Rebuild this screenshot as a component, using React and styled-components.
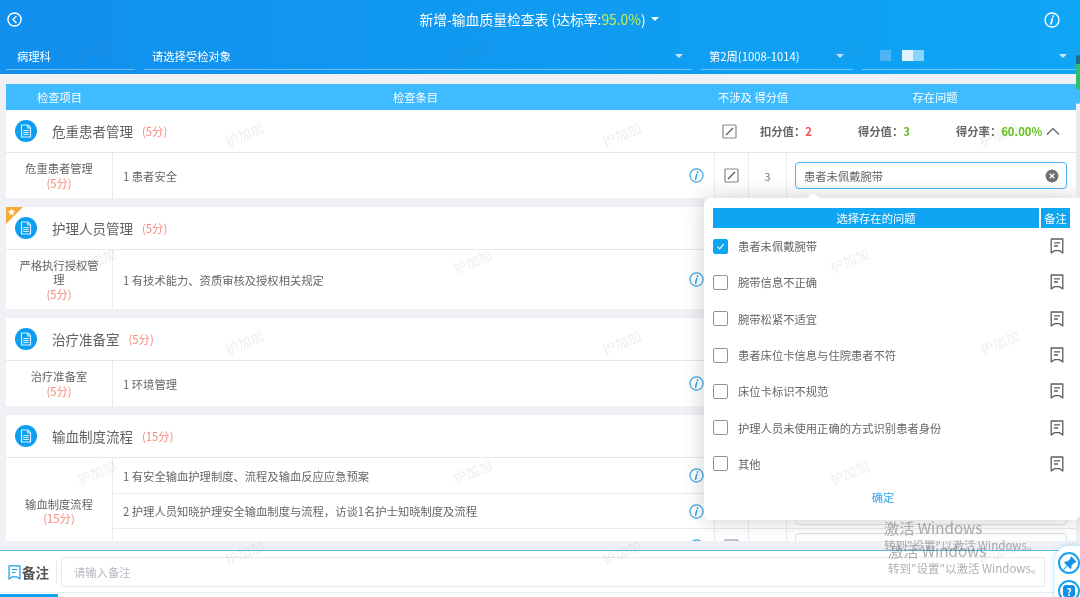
import React from 'react';
import styled, { createGlobalStyle } from 'styled-components';
import { BsPinAngleFill } from 'react-icons/bs';

const GlobalStyle = createGlobalStyle`
  html, body {
    margin: 0;
    padding: 0;
    background: #f0f1f6;
  }
  * {
    box-sizing: border-box;
  }
`;

const Page = styled.div`
  position: relative;
  width: 1080px;
  height: 597px;
  overflow: hidden;
  display: flex;
  flex-direction: column;
  background: #f0f1f6;
  color: #666;
  font-family: "Noto Sans CJK SC", "Noto Sans", sans-serif;
  font-size: 11.3px;
  filter: blur(0.5px);
`;

// Barra superior
const Header = styled.header`
  height: 74px;
  flex: none;
  color: #fff;
  background: linear-gradient(90deg, #118fee, #0ea6f5);
`;

const TitleRow = styled.div`
  height: 39px;
  padding: 0 20px 0 7px;
  display: flex;
  align-items: center;
  justify-content: space-between;
`;

const Title = styled.div`
  display: flex;
  align-items: center;
  gap: 5px;
  font-size: 13.8px;
  margin-left: 12px;
  margin-top: -2px;
`;

const Rate = styled.span`
  color: #c5ee4f;
`;

const Caret = styled.i`
  display: block;
  flex: none;
  width: 0;
  height: 0;
  border-left: 4px solid transparent;
  border-right: 4px solid transparent;
  border-top: 4px solid ${(p) => p.$color || '#fff'};
`;

const FilterRow = styled.div`
  height: 31px;
  padding: 0 4px 0 6px;
  display: flex;
  gap: 9px;
`;

const Filter = styled.div`
  width: ${(p) => p.$width}px;
  flex: ${(p) => (p.$width ? 'none' : 1)};
  padding: 3px 9px 0 ${(p) => p.$left || 11}px;
  display: flex;
  align-items: center;
  justify-content: space-between;
  font-size: 11.3px;
  border-bottom: 1px solid rgba(255, 255, 255, 0.4);
`;

const Masks = styled.div`
  display: flex;
  gap: 11px;
  margin: -1px 0 0 7px;
`;

const Mask = styled.span`
  display: block;
  width: ${(p) => p.$width}px;
  height: 11px;
  background: ${(p) => p.$bg};
`;

// Conteudo
const Content = styled.main`
  flex: 1;
  min-height: 0;
  padding: 10px 4px 9px 6px;
  display: flex;
  flex-direction: column;
`;

const Scroller = styled.div`
  flex: 1;
  min-height: 0;
  overflow: hidden;
`;

const TableHead = styled.div`
  height: 26px;
  display: grid;
  grid-template-columns: 107px 1fr 34px 38px 290px;
  align-items: center;
  text-align: center;
  color: #fff;
  background: #3fbbff;
  font-size: 11.3px;
  white-space: nowrap;
`;

const HeadCell = styled.div`
  grid-column: ${(p) => p.$span || 'auto'};
  padding-left: ${(p) => p.$shift || 0}px;
`;

const Section = styled.section`
  position: relative;
  margin-bottom: 9px;
  background: #fff;
`;

const SectionHead = styled.div`
  height: 43px;
  display: grid;
  grid-template-columns: 706px 34px 1fr;
  align-items: center;
  border-bottom: 1px solid #e6e8ec;
`;

const SectionName = styled.div`
  display: flex;
  align-items: center;
  padding-left: 9px;
  font-size: 13.5px;
  color: #606266;
`;

const NameText = styled.span`
  margin: 0 9px 0 15px;
`;

const Score = styled.span`
  color: #f68a7b;
  font-size: 11.3px;
`;

const Ribbon = styled.div`
  position: absolute;
  left: 0;
  top: 0;
  line-height: 0;
`;

const CheckCell = styled.div`
  display: flex;
  align-items: center;
  justify-content: center;
`;

const Summary = styled.div`
  display: flex;
  align-items: center;
  padding: 0 16px 0 14px;
  font-weight: 700;
  color: #666;
  white-space: nowrap;
`;

const SummaryItem = styled.span`
  width: ${(p) => p.$width}px;
  flex: none;
`;

const Value = styled.span`
  color: ${(p) => p.$color};
`;

const SectionBody = styled.div`
  display: grid;
  grid-template-columns: 107px 1fr;
`;

const Category = styled.div`
  padding: 0 10px;
  display: flex;
  flex-direction: column;
  align-items: center;
  justify-content: center;
  text-align: center;
  line-height: 14.5px;
  color: #666;
  border-right: 1px solid #e9ebef;
`;

const Row = styled.div`
  height: ${(p) => p.$height}px;
  display: grid;
  grid-template-columns: 1fr 34px 38px 290px;
  align-items: stretch;
  border-bottom: ${(p) => (p.$line ? '1px solid #e9ebef' : 'none')};
`;

const RowText = styled.div`
  padding: 0 10px;
  display: flex;
  align-items: center;
  justify-content: space-between;
  white-space: nowrap;
`;

const RowCell = styled.div`
  display: flex;
  align-items: center;
  justify-content: center;
  border-left: 1px solid #e9ebef;
  color: #777;
`;

const ProblemCell = styled.div`
  padding: 0 9px 0 8px;
  display: flex;
  align-items: center;
  border-left: 1px solid #e9ebef;
`;

const ProblemInput = styled.div`
  flex: 1;
  height: 27px;
  padding: 0 7px 0 8px;
  display: flex;
  align-items: center;
  justify-content: space-between;
  border: 1px solid ${(p) => (p.$active ? '#4cb2f3' : '#dcdfe6')};
  border-radius: 4px;
  background: #fff;
`;

// Popover de problemas
const Popover = styled.div`
  position: absolute;
  left: 704px;
  top: 198px;
  width: 376px;
  height: 322px;
  padding: 10px 10px 8px 9px;
  background: #fff;
  border-radius: 6px 0 6px 6px;
  box-shadow: 0 0 22px rgba(0, 0, 0, 0.2);

  &::before {
    content: '';
    position: absolute;
    left: 103px;
    top: -5px;
    border-left: 6px solid transparent;
    border-right: 6px solid transparent;
    border-bottom: 5px solid #fff;
  }
`;

const PopHead = styled.div`
  height: 20px;
  display: grid;
  grid-template-columns: 1fr 29px;
  gap: 2px;
  text-align: center;
  line-height: 20px;
  color: #fff;
`;

const PopHeadCell = styled.div`
  background: #0ea5f3;
  white-space: nowrap;
`;

const PopRow = styled.div`
  height: 36.3px;
  padding: 0 5px 0 0;
  display: flex;
  align-items: center;
  gap: 10px;
`;

const PopLabel = styled.span`
  flex: 1;
  color: #666;
`;

const Box = styled.span`
  width: 15px;
  height: 15px;
  flex: none;
  display: flex;
  align-items: center;
  justify-content: center;
  border-radius: 2px;
  border: 1px solid ${(p) => (p.$checked ? '#0ea5f3' : '#8f9296')};
  background: ${(p) => (p.$checked ? '#0ea5f3' : '#fff')};
`;

const Confirm = styled.div`
  height: 30px;
  display: flex;
  align-items: center;
  justify-content: center;
  padding-right: 17px;
  color: #2ea7f2;
`;

// Rodape
const Footer = styled.footer`
  position: relative;
  height: 47px;
  flex: none;
  padding: 6px 35px 0 7px;
  background: #fff;
  border-top: 1px solid #58baf1;

  &::before {
    content: '';
    position: absolute;
    left: 0;
    right: 0;
    bottom: 4px;
    height: 1px;
    background: #eceef1;
  }

  &::after {
    content: '';
    position: absolute;
    left: 0;
    bottom: 0;
    width: 58px;
    height: 3px;
    background: #0ea5f3;
  }
`;

const NoteBar = styled.div`
  display: flex;
  align-items: center;
`;

const NoteLabel = styled.div`
  width: 50px;
  height: 22px;
  flex: none;
  display: flex;
  align-items: center;
  font-size: 13.5px;
  font-weight: 700;
  color: #555;
  border-right: 1px solid #e9ebef;
`;

const NoteInput = styled.div`
  width: 984px;
  height: 30px;
  margin-left: 4px;
  padding-left: 12px;
  display: flex;
  align-items: center;
  border: 1px solid #e8eaee;
  border-radius: 2px;
  color: #b4b7bd;
`;

// Coisas por cima da pagina
const Floating = styled.div`
  position: absolute;
  right: 0;
  top: 546px;
  width: 25px;
  height: 60px;
  padding: 6px 0 0 3px;
  display: flex;
  flex-direction: column;
  gap: 6px;
  background: #fff;
  border-radius: 14px 0 0 14px;
  box-shadow: 0 0 6px rgba(14, 165, 243, 0.35);
`;

const RoundButton = styled.div`
  width: 22px;
  height: 22px;
  flex: none;
  display: flex;
  align-items: center;
  justify-content: center;
  border-radius: 50%;
  border: 2px solid #17a3ee;
  color: #1190e6;
`;

const Question = styled.span`
  width: 12px;
  height: 12px;
  display: flex;
  align-items: center;
  justify-content: center;
  border-radius: 3px;
  background: #1190e6;
  color: #fff;
  font-size: 10px;
  font-weight: 700;
`;

const ScrollThumb = styled.div`
  position: absolute;
  right: 0;
  top: 55px;
  width: 4px;
  height: 49px;
  border-radius: 2px;
  background: linear-gradient(180deg, #1b6f8e 0 18%, #2fbf71 18% 70%, #3fbbff 70%);
`;

const ScrollTrack = styled.div`
  position: absolute;
  right: 0;
  top: 110px;
  width: 4px;
  height: 88px;
  background: #e8e9ed;
`;

const Watermark = styled.span`
  position: absolute;
  left: ${(p) => p.$x - 21}px;
  top: ${(p) => p.$y - 10}px;
  font-size: 13.5px;
  color: rgba(120, 125, 135, 0.13);
  transform: rotate(-22deg);
  pointer-events: none;
  white-space: nowrap;
`;

const Activation = styled.div`
  position: absolute;
  left: ${(p) => p.$x}px;
  top: ${(p) => p.$y}px;
  color: rgba(110, 110, 110, 0.55);
  pointer-events: none;
  white-space: nowrap;
`;

const ActivationTitle = styled.div`
  font-size: 15.2px;
  line-height: 19px;
`;

const ActivationText = styled.div`
  font-size: 11.5px;
  line-height: 16px;
`;

const BackIcon = () => (
  <svg width="15" height="15" viewBox="0 0 16 16" fill="none" stroke="#fff" strokeWidth="1.5">
    <circle cx="8" cy="8" r="7" />
    <path d="M9.6 4.8 6.4 8l3.2 3.2" strokeLinecap="round" strokeLinejoin="round" />
  </svg>
);

const InfoIcon = ({ color = '#3ba3e6', size = 15 }) => (
  <svg width={size} height={size} viewBox="0 0 16 16" fill="none">
    <circle cx="8" cy="8" r="7" stroke={color} strokeWidth="1.3" />
    <circle cx="9.1" cy="4.3" r="1" fill={color} />
    <path d="M8.3 6.6 7 12" stroke={color} strokeWidth="1.7" strokeLinecap="round" />
  </svg>
);

const DocIcon = () => (
  <svg width="22" height="22" viewBox="0 0 22 22">
    <circle cx="11" cy="11" r="11" fill="#0e9ef0" />
    <path d="M6.5 5h6.3L15.5 7.7V17h-9z" fill="none" stroke="#d8f0ff" strokeWidth="1.2" strokeLinejoin="round" />
    <path d="M12.6 5v3h2.9M8.2 10.5h5.6M8.2 12.5h5.6M8.2 14.5h5.6" fill="none" stroke="#d8f0ff" strokeWidth="1" />
  </svg>
);

const StarRibbon = () => (
  <svg width="17" height="17" viewBox="0 0 17 17">
    <path d="M0 0h17L0 17z" fill="#f5ac3a" />
    <path d="M5.5 1.6l1.1 2.2 2.4.3-1.8 1.7.5 2.4-2.2-1.2-2.2 1.2.5-2.4L2 4.1l2.4-.3z" fill="#fff" />
  </svg>
);

const SlashBox = () => (
  <svg width="15" height="15" viewBox="0 0 15 15" fill="none">
    <rect x="1" y="1" width="13" height="13" rx="1" stroke="#85878c" strokeWidth="1.2" />
    <path d="M4 11 11 4" stroke="#55575c" strokeWidth="1.2" />
  </svg>
);

const NoteIcon = ({ color = '#5c5f64', size = 16 }) => (
  <svg width={size} height={size} viewBox="0 0 14 16" fill="none" stroke={color} strokeWidth="1.3">
    <path d="M1.2 1h11.6v14l-3.4-2.4H4.6L1.2 15z" strokeLinejoin="round" />
    <path d="M4 4.8h6M4 8h4" />
  </svg>
);

const ClearIcon = () => (
  <svg width="14" height="14" viewBox="0 0 13 13">
    <circle cx="6.5" cy="6.5" r="6" fill="#6f7176" />
    <path d="M4.4 4.4l4.2 4.2M8.6 4.4 4.4 8.6" stroke="#fff" strokeWidth="1.2" />
  </svg>
);

const ChevronUp = () => (
  <svg width="14" height="9" viewBox="0 0 14 9" fill="none" stroke="#55575c" strokeWidth="1.1">
    <path d="M1 7.5 7 1.5l6 6" />
  </svg>
);

const CheckMark = () => (
  <svg width="9" height="9" viewBox="0 0 9 9" fill="none" stroke="#fff" strokeWidth="1.2">
    <path d="M1.5 4.6 3.7 6.8 7.6 2.2" />
  </svg>
);

const sections = [
  {
    name: '危重患者管理',
    score: '5分',
    category: '危重患者管理',
    summary: true,
    rows: [{ id: 1, text: '1 患者安全', height: 45, value: '3', answer: '患者未佩戴腕带' }],
  },
  {
    name: '护理人员管理',
    score: '5分',
    category: '严格执行授权管理',
    star: true,
    rows: [{ id: 1, text: '1 有技术能力、资质审核及授权相关规定', height: 59, value: '3' }],
  },
  {
    name: '治疗准备室',
    score: '5分',
    category: '治疗准备室',
    rows: [{ id: 1, text: '1 环境管理', height: 45, value: '3' }],
  },
  {
    name: '输血制度流程',
    score: '15分',
    category: '输血制度流程',
    rows: [
      { id: 1, text: '1 有安全输血护理制度、流程及输血反应应急预案', height: 36, value: '5', line: true },
      { id: 2, text: '2 护理人员知晓护理安全输血制度与流程，访谈1名护士知晓制度及流程', height: 35, value: '5', line: true },
      { id: 3, text: '', height: 35, value: '' },
    ],
  },
];

const problems = [
  '患者未佩戴腕带',
  '腕带信息不正确',
  '腕带松紧不适宜',
  '患者床位卡信息与住院患者不符',
  '床位卡标识不规范',
  '护理人员未使用正确的方式识别患者身份',
  '其他',
];

const marks = [
  [97, 50], [474, 50], [850, 50],
  [245, 134], [622, 134], [999, 134],
  [97, 260], [473, 261], [850, 260],
  [245, 342], [622, 342], [1000, 342],
  [97, 472], [473, 471], [850, 472],
  [245, 552], [622, 552], [998, 552],
];

export default function App() {
  return (
    <Page>
      <GlobalStyle />
      <Header>
        <TitleRow>
          <BackIcon />
          <Title>
            <span>新增-输血质量检查表 (达标率:<Rate>95.0%</Rate>)</span>
            <Caret />
          </Title>
          <InfoIcon color="#fff" size={16} />
        </TitleRow>
        <FilterRow>
          <Filter $width={129}>病理科</Filter>
          <Filter $width={548} $left={8}>
            请选择受检对象
            <Caret $color="#c6e6fb" />
          </Filter>
          <Filter $width={152} $left={8}>
            第2周(1008-1014)
            <Caret $color="#c6e6fb" />
          </Filter>
          <Filter>
            <Masks>
              <Mask $width={11} $bg="#4db5f5" />
              <Mask $width={22} $bg="linear-gradient(90deg, #e4f4fe 50%, #8ad3fa 50%)" />
            </Masks>
            <Caret $color="#c6e6fb" />
          </Filter>
        </FilterRow>
      </Header>

      <Content>
        <TableHead>
          <HeadCell>检查项目</HeadCell>
          <HeadCell $shift={4}>检查条目</HeadCell>
          <HeadCell $span="3 / 5" $shift={4}>不涉及 得分值</HeadCell>
          <HeadCell $shift={8}>存在问题</HeadCell>
        </TableHead>
        <Scroller>
          {sections.map((section) => (
            <Section key={section.name}>
              {section.star && (
                <Ribbon>
                  <StarRibbon />
                </Ribbon>
              )}
              <SectionHead>
                <SectionName>
                  <DocIcon />
                  <NameText>{section.name}</NameText>
                  <Score>({section.score})</Score>
                </SectionName>
                {section.summary && (
                  <>
                    <CheckCell>
                      <SlashBox />
                    </CheckCell>
                    <Summary>
                      <SummaryItem $width={98}>
                        扣分值：<Value $color="#f5504e">2</Value>
                      </SummaryItem>
                      <SummaryItem $width={98}>
                        得分值：<Value $color="#62b81c">3</Value>
                      </SummaryItem>
                      <SummaryItem $width={90}>
                        得分率：<Value $color="#62c01c">60.00%</Value>
                      </SummaryItem>
                      <ChevronUp />
                    </Summary>
                  </>
                )}
              </SectionHead>
              <SectionBody>
                <Category>
                  <span>{section.category}</span>
                  <Score>({section.score})</Score>
                </Category>
                <div>
                  {section.rows.map((row) => (
                    <Row key={row.id} $height={row.height} $line={row.line}>
                      <RowText>
                        <span>{row.text}</span>
                        <InfoIcon />
                      </RowText>
                      <RowCell>
                        <SlashBox />
                      </RowCell>
                      <RowCell>{row.value}</RowCell>
                      <ProblemCell>
                        <ProblemInput $active={!!row.answer}>
                          <span>{row.answer}</span>
                          {row.answer && <ClearIcon />}
                        </ProblemInput>
                      </ProblemCell>
                    </Row>
                  ))}
                </div>
              </SectionBody>
            </Section>
          ))}
        </Scroller>
      </Content>

      <Footer>
        <NoteBar>
          <NoteLabel>
            <NoteIcon color="#1d9bec" size={15} />
            备注
          </NoteLabel>
          <NoteInput>请输入备注</NoteInput>
        </NoteBar>
      </Footer>

      <Popover>
        <PopHead>
          <PopHeadCell>选择存在的问题</PopHeadCell>
          <PopHeadCell>备注</PopHeadCell>
        </PopHead>
        {problems.map((problem, index) => (
          <PopRow key={problem}>
            <Box $checked={index === 0}>{index === 0 && <CheckMark />}</Box>
            <PopLabel>{problem}</PopLabel>
            <NoteIcon />
          </PopRow>
        ))}
        <Confirm>确定</Confirm>
      </Popover>

      <ScrollThumb />
      <ScrollTrack />

      {marks.map(([x, y]) => (
        <Watermark key={`${x}-${y}`} $x={x} $y={y}>
          护加加
        </Watermark>
      ))}

      <Activation $x={884} $y={518}>
        <ActivationTitle>激活 Windows</ActivationTitle>
        <ActivationText>转到"设置"以激活 Windows。</ActivationText>
      </Activation>
      <Activation $x={888} $y={541}>
        <ActivationTitle>激活 Windows</ActivationTitle>
        <ActivationText>转到"设置"以激活 Windows。</ActivationText>
      </Activation>

      <Floating>
        <RoundButton>
          <BsPinAngleFill size={15} />
        </RoundButton>
        <RoundButton>
          <Question>?</Question>
        </RoundButton>
      </Floating>
    </Page>
  );
}
